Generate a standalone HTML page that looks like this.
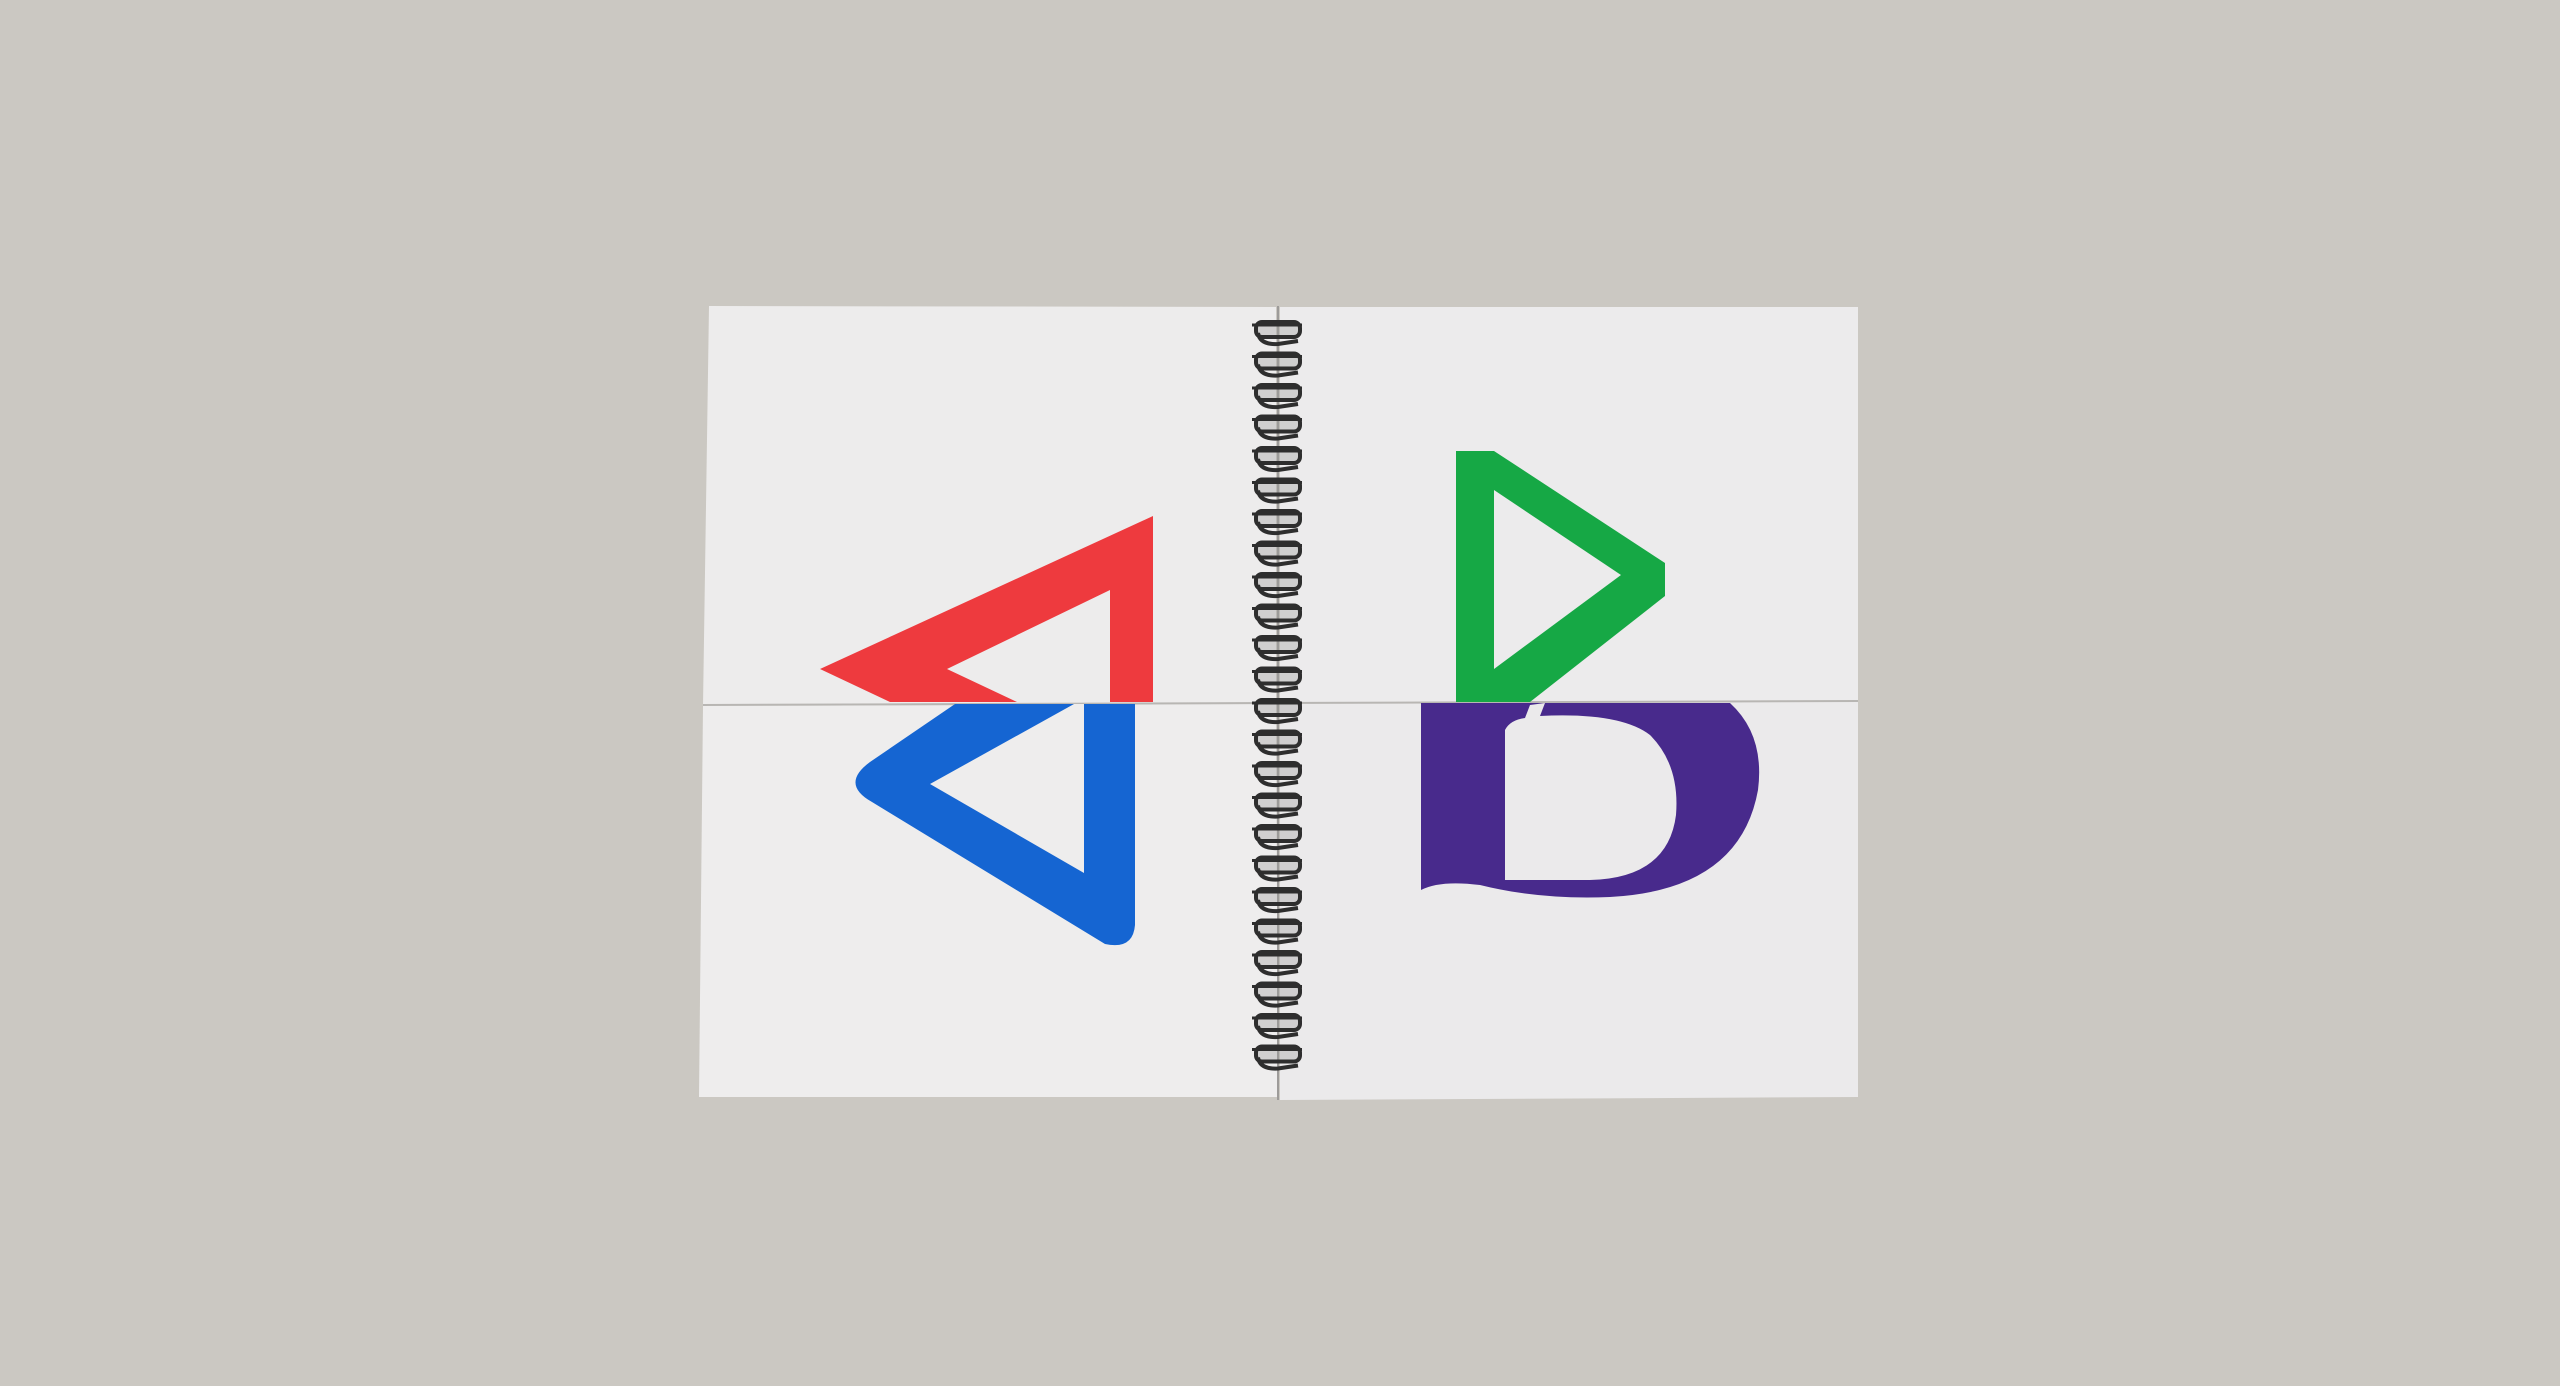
<!DOCTYPE html>
<html><head><meta charset="utf-8"><style>
html,body{margin:0;padding:0;background:#cbc8c2;width:2560px;height:1386px;overflow:hidden}
svg{display:block}
</style></head><body>
<svg width="2560" height="1386" viewBox="0 0 2560 1386" xmlns="http://www.w3.org/2000/svg">
<rect width="2560" height="1386" fill="#cbc8c2"/>
<polygon points="709,306 1276,307 1276,704 703,706" fill="#edecec"/>
<polygon points="1280,307 1858,307 1858,701 1280,703" fill="#ecebec"/>
<polygon points="703,706 1276,704 1278,1097 699,1097" fill="#eeeded"/>
<polygon points="1280,703 1858,701 1858,1097 1280,1100" fill="#ebeaeb"/>
<line x1="703" y1="705" x2="1858" y2="701" stroke="#b8b6b3" stroke-width="2"/>
<line x1="1278" y1="306" x2="1278" y2="1100" stroke="#9d9b99" stroke-width="2"/>
<!-- red -->
<path d="M820,669 L1153,516 L1153,702 L1110,702 L1110,590 L947,669 L1017,702 L890,702 Z" fill="#ee3a3e"/>
<!-- blue -->
<path d="M955,704 L1135,704 L1135,925 Q1133,950 1105,944 L872,802 Q840,784 870,762 Z" fill="#1565d2"/>
<path d="M1074,704 L930,784 L1084,873 L1084,704 Z" fill="#eeeded"/>
<!-- green -->
<path d="M1456,451 L1494,451 L1665,563 L1665,596 L1530,702 L1456,702 Z" fill="#16a845"/>
<path d="M1494,490 L1621,575 L1494,669 Z" fill="#ecebec"/>
<!-- purple -->
<path d="M1421,703 L1421,890 Q1440,880 1480,885 Q1540,900 1610,897 Q1740,890 1758,790 Q1765,735 1730,703 Z" fill="#482a8c"/>
<path d="M1505,880 L1505,730 Q1510,720 1525,718 L1530,705 L1545,703 L1540,716 Q1620,712 1650,735 Q1680,765 1676,815 Q1668,878 1590,880 Z" fill="#ebeaeb"/>
<!-- spiral -->
<g fill="none" stroke="#2e2e2e" stroke-width="4">
<g id="r">
<rect x="1256" y="322" width="44" height="15" rx="6" fill="#9a9a9a" fill-opacity="0.35"/>
<path d="M1258,333 Q1260,345 1278,344 L1298,341"/>
<line x1="1252" y1="325" x2="1302" y2="325" stroke-width="3"/>
</g>
<use href="#r" y="31.5"/><use href="#r" y="63"/><use href="#r" y="94.5"/><use href="#r" y="126"/>
<use href="#r" y="157.5"/><use href="#r" y="189"/><use href="#r" y="220.5"/><use href="#r" y="252"/>
<use href="#r" y="283.5"/><use href="#r" y="315"/><use href="#r" y="346.5"/><use href="#r" y="378"/>
<use href="#r" y="409.5"/><use href="#r" y="441"/><use href="#r" y="472.5"/><use href="#r" y="504"/>
<use href="#r" y="535.5"/><use href="#r" y="567"/><use href="#r" y="598.5"/><use href="#r" y="630"/>
<use href="#r" y="661.5"/><use href="#r" y="693"/><use href="#r" y="724.5"/>
</g>
</svg>
</body></html>
